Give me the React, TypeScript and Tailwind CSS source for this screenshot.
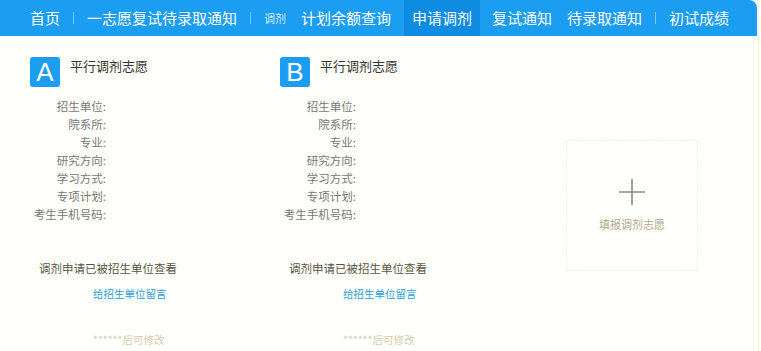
import React from 'react'

const font = { fontFamily: '"Noto Sans CJK SC", "Noto Sans", sans-serif' }

const labels = ['招生单位:', '院系所:', '专业:', '研究方向:', '学习方式:', '专项计划:', '考生手机号码:']

function NavSep() {
	return <span className="mx-[13px] h-[12px] w-px bg-[#7cc6f6]" />
}

function Nav() {
	return (
		<div className="flex h-[36px] w-[757px] items-center rounded-tr-[8px] bg-[#1b9df2] pl-[30px] text-[15px] text-white">
			<span>首页</span>
			<NavSep />
			<span>一志愿复试待录取通知</span>
			<NavSep />
			<span className="text-[11px] text-[#d6ecfc]">调剂</span>
			<span className="ml-[15px]">计划余额查询</span>
			<span className="ml-[13px] flex h-full items-center bg-[#0e8ce2] px-[8px]">申请调剂</span>
			<span className="ml-[12px]">复试通知</span>
			<span className="ml-[15px]">待录取通知</span>
			<NavSep />
			<span>初试成绩</span>
		</div>
	)
}

function Choice({ letter }: { letter: string }) {
	return (
		<div className="w-[250px] shrink-0">
			<div className="flex items-start">
				<div className="flex h-[30px] w-[30px] items-center justify-center rounded-[3px] bg-[#1b9df2] text-[26px] leading-none text-white" style={{ fontFamily: '"Liberation Sans", sans-serif' }}>
					{letter}
				</div>
				<div className="ml-[10px] text-[13px] leading-[18px] text-[#333]">平行调剂志愿</div>
			</div>
			<div className="mt-[10px] flex flex-col">
				{labels.map((l) => (
					<div key={l} className="w-[76px] text-right text-[11.5px] leading-[18px] text-[#777]">
						{l}
					</div>
				))}
			</div>
			<div className="ml-[9px] mt-[36px] text-[11.5px] leading-[18px] text-[#5a5548]">调剂申请已被招生单位查看</div>
			<div className="ml-[63px] mt-[8px] text-[10.5px] leading-[18px] text-[#2a9fe0]">给招生单位留言</div>
			<div className="ml-[63px] mt-[28px] text-[10.5px] leading-[18px] text-[#d4ccae]">******后可修改</div>
		</div>
	)
}

export default function App() {
	return (
		<div className="h-[351px] w-[761px] overflow-hidden bg-[#fffffb]" style={font}>
			<div className="h-[351px] w-[759px] border-r border-[#f6efc8]">
				<Nav />
				<div className="mt-[21px] flex pl-[30px]">
					<Choice letter="A" />
					<Choice letter="B" />
					<div className="ml-[36px] mt-[83px] flex h-[131px] w-[132px] flex-col items-center border border-dashed border-[#efefe8]">
						<svg className="mt-[38px]" width="26" height="26" viewBox="0 0 26 26">
							<path d="M13 0V26M0 13H26" stroke="#8a8a82" strokeWidth="1.6" />
						</svg>
						<div className="mt-[11px] text-[11px] text-[#b0a78c]">填报调剂志愿</div>
					</div>
				</div>
			</div>
		</div>
	)
}
